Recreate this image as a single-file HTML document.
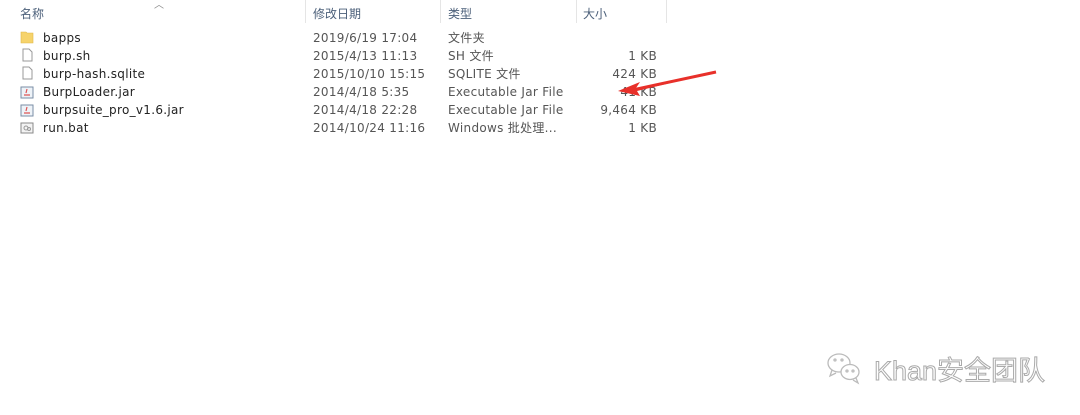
<!DOCTYPE html>
<html><head><meta charset="utf-8"><style>
body{margin:0;width:1080px;height:415px;background:#fff;position:relative;overflow:hidden;font-family:"DejaVu Sans","Noto Sans CJK SC",sans-serif;font-size:12px;color:#222}
.h{position:absolute;top:5px;color:#4c607a;font-size:12px}
.sep{position:absolute;top:0;height:23px;width:1px;background:#e5e5e5}
.t{position:absolute;white-space:nowrap;line-height:14px;letter-spacing:0.3px}
.d{color:#555}
.ic{position:absolute;left:20px;width:14px;height:14px}
</style></head><body>
<div class="h" style="left:20px">名称</div>
<div style="position:absolute;left:154px;top:-4px;color:#888;font-size:10px">︿</div>
<div class="h" style="left:313px">修改日期</div>
<div class="h" style="left:448px">类型</div>
<div class="h" style="left:583px">大小</div>
<div class="sep" style="left:305px"></div><div class="sep" style="left:440px"></div><div class="sep" style="left:576px"></div><div class="sep" style="left:666px"></div>

<svg class="ic" style="top:30px" viewBox="0 0 14 14"><path d="M1 2h5l1 1h6v10H1z" fill="#f6d36b" stroke="#e0b84a" stroke-width=".6"/></svg>
<svg class="ic" style="top:48px" viewBox="0 0 14 14"><path d="M3 1h6l3 3v9H3z" fill="#fff" stroke="#999"/></svg>
<svg class="ic" style="top:66px" viewBox="0 0 14 14"><path d="M3 1h6l3 3v9H3z" fill="#fff" stroke="#999"/></svg>
<svg class="ic" style="top:85px" viewBox="0 0 14 14"><rect x="1" y="2" width="12" height="11" fill="#eef3f8" stroke="#7a8ea6"/><path d="M4 10h6M7 4l-1 4" stroke="#d55" stroke-width="1.2"/></svg>
<svg class="ic" style="top:103px" viewBox="0 0 14 14"><rect x="1" y="2" width="12" height="11" fill="#eef3f8" stroke="#7a8ea6"/><path d="M4 10h6M7 4l-1 4" stroke="#d55" stroke-width="1.2"/></svg>
<svg class="ic" style="top:121px" viewBox="0 0 14 14"><rect x="1" y="2" width="12" height="10" fill="#f3f3f3" stroke="#888"/><circle cx="6" cy="7" r="2" fill="none" stroke="#999"/><circle cx="9" cy="8" r="1.5" fill="none" stroke="#999"/></svg>

<div class="t" style="left:43px;top:31px">bapps</div>
<div class="t" style="left:43px;top:49px">burp.sh</div>
<div class="t" style="left:43px;top:67px">burp-hash.sqlite</div>
<div class="t" style="left:43px;top:85px">BurpLoader.jar</div>
<div class="t" style="left:43px;top:103px">burpsuite_pro_v1.6.jar</div>
<div class="t" style="left:43px;top:121px">run.bat</div>

<div class="t d" style="left:313px;top:31px">2019/6/19 17:04</div>
<div class="t d" style="left:313px;top:49px">2015/4/13 11:13</div>
<div class="t d" style="left:313px;top:67px">2015/10/10 15:15</div>
<div class="t d" style="left:313px;top:85px">2014/4/18 5:35</div>
<div class="t d" style="left:313px;top:103px">2014/4/18 22:28</div>
<div class="t d" style="left:313px;top:121px">2014/10/24 11:16</div>

<div class="t d" style="left:448px;top:31px">文件夹</div>
<div class="t d" style="left:448px;top:49px">SH 文件</div>
<div class="t d" style="left:448px;top:67px">SQLITE 文件</div>
<div class="t d" style="left:448px;top:85px">Executable Jar File</div>
<div class="t d" style="left:448px;top:103px">Executable Jar File</div>
<div class="t d" style="left:448px;top:121px">Windows 批处理...</div>

<div class="t d" style="right:423px;top:49px">1 KB</div>
<div class="t d" style="right:423px;top:67px">424 KB</div>
<div class="t d" style="right:423px;top:85px">41 KB</div>
<div class="t d" style="right:423px;top:103px">9,464 KB</div>
<div class="t d" style="right:423px;top:121px">1 KB</div>

<svg style="position:absolute;left:0;top:0" width="1080" height="415"><path d="M716 72L636 88L640 82L618 91L640 96L637 91Z" fill="#e8302a"/><path d="M716 72L632 90" stroke="#e8302a" stroke-width="3"/></svg>

<svg style="position:absolute;left:825px;top:350px" width="40" height="36" viewBox="0 0 40 36" fill="none" stroke="#bbb" stroke-width="1.3"><ellipse cx="14" cy="13" rx="11" ry="9"/><path d="M7 20l-2 6 6-3"/><ellipse cx="25" cy="22" rx="9" ry="7.5" fill="#fff"/><path d="M31 28l2 5-5-3"/><circle cx="10" cy="10" r="1"/><circle cx="17" cy="10" r="1"/><circle cx="22" cy="21" r="1"/><circle cx="28" cy="21" r="1"/></svg>
<div style="position:absolute;left:874px;top:349px;font-family:'Liberation Sans','Noto Sans CJK SC',sans-serif;font-size:27px;color:#fff;-webkit-text-stroke:1px #aaa;white-space:nowrap">Khan安全团队</div>
</body></html>
